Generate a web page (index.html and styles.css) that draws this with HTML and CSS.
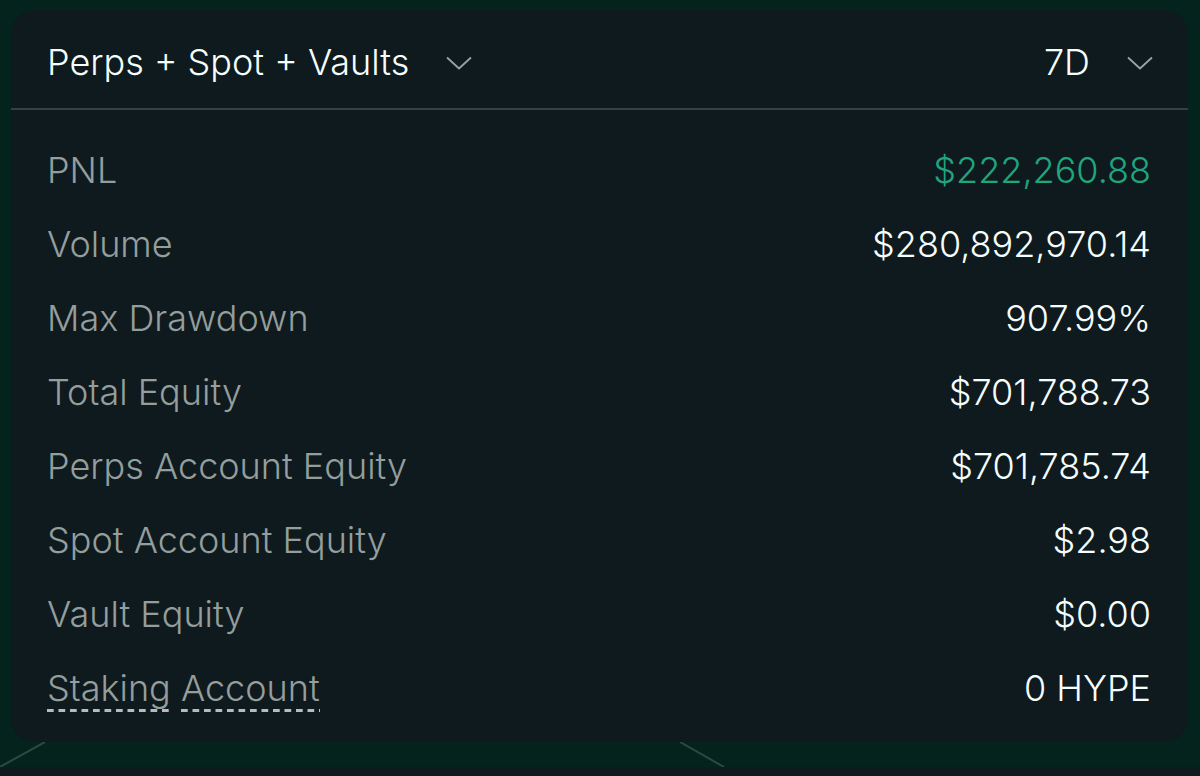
FILE: index.html
```html
<!DOCTYPE html>
<html>
<head>
<meta charset="utf-8">
<link rel="stylesheet" href="styles.css">
</head>
<body>
<div class="page">
  <div class="card">
    <div class="card-header">
      <div class="select">
        <span class="select-label">Perps + Spot + Vaults</span>
        <svg class="chev" width="26" height="14" viewBox="0 0 26 14"><path d="M1 1.5 L13 12.5 L25 1.5" fill="none" stroke="#9aa3a4" stroke-width="1.8"/></svg>
      </div>
      <div class="select">
        <span class="select-label">7D</span>
        <svg class="chev" width="26" height="14" viewBox="0 0 26 14"><path d="M1 1.5 L13 12.5 L25 1.5" fill="none" stroke="#9aa3a4" stroke-width="1.8"/></svg>
      </div>
    </div>
    <div class="rows">
      <div class="row"><span class="label">PNL</span><span class="value green">$222,260.88</span></div>
      <div class="row"><span class="label">Volume</span><span class="value">$280,892,970.14</span></div>
      <div class="row"><span class="label">Max Drawdown</span><span class="value">907.99%</span></div>
      <div class="row"><span class="label">Total Equity</span><span class="value">$701,788.73</span></div>
      <div class="row"><span class="label">Perps Account Equity</span><span class="value">$701,785.74</span></div>
      <div class="row"><span class="label">Spot Account Equity</span><span class="value">$2.98</span></div>
      <div class="row"><span class="label">Vault Equity</span><span class="value">$0.00</span></div>
      <div class="row"><span class="label"><span class="dashed">Staking</span> <span class="dashed">Account</span></span><span class="value">0 HYPE</span></div>
    </div>
  </div>
  <div class="band">
    <svg class="band-lines" width="1200" height="25" viewBox="0 0 1200 25">
      <line x1="-2" y1="26" x2="45" y2="0" stroke="#2c4a42" stroke-width="2"/>
      <line x1="680" y1="0" x2="724" y2="25" stroke="#2c4a42" stroke-width="2"/>
    </svg>
  </div>
  <div class="footer-strip"></div>
</div>
</body>
</html>
```

FILE: styles.css
```css
html, body {
  margin: 0;
  padding: 0;
  background: #03231c;
}
body {
  width: 1200px;
  height: 776px;
  overflow: hidden;
  font-family: Inter, "Noto Sans", sans-serif;
  font-weight: 350;
}
.page {
  display: flex;
  flex-direction: column;
  padding-top: 10px;
}
.card {
  margin-left: 11px;
  width: 1177px;
  height: 732px;
  box-sizing: border-box;
  background: #0f1a1f;
  border-radius: 24px;
  display: flex;
  flex-direction: column;
}
.card-header {
  flex: none;
  display: flex;
  align-items: center;
  justify-content: space-between;
  padding: 0 35px 0 36px;
  border-bottom: 2px solid #363f43;
  box-sizing: border-box;
  height: 100px;
}
.select {
  display: flex;
  align-items: center;
  gap: 37px;
  margin-top: 5px;
}
.select-label {
  color: #f6fefd;
  font-size: 36px;
}
.chev {
  display: block;
  margin-top: 2px;
}
.rows {
  display: flex;
  flex-direction: column;
  padding: 23px 37px 0 36px;
}
.row {
  height: 74px;
  display: flex;
  align-items: center;
  justify-content: space-between;
  font-size: 36px;
}
.label {
  color: #949e9c;
}
.value {
  color: #f6fefd;
}
.value.green {
  color: #1fa67d;
}
.dashed {
  padding-bottom: 2px;
  background-image: linear-gradient(to right, #b4bcbc 0 7px, transparent 7px 11.5px);
  background-size: 11.5px 3px;
  background-repeat: repeat-x;
  background-position: 0 100%;
}
.band {
  height: 25px;
  flex: none;
}
.band-lines {
  display: block;
}
.footer-strip {
  height: 9px;
  background: #0f1a1f;
}
```
